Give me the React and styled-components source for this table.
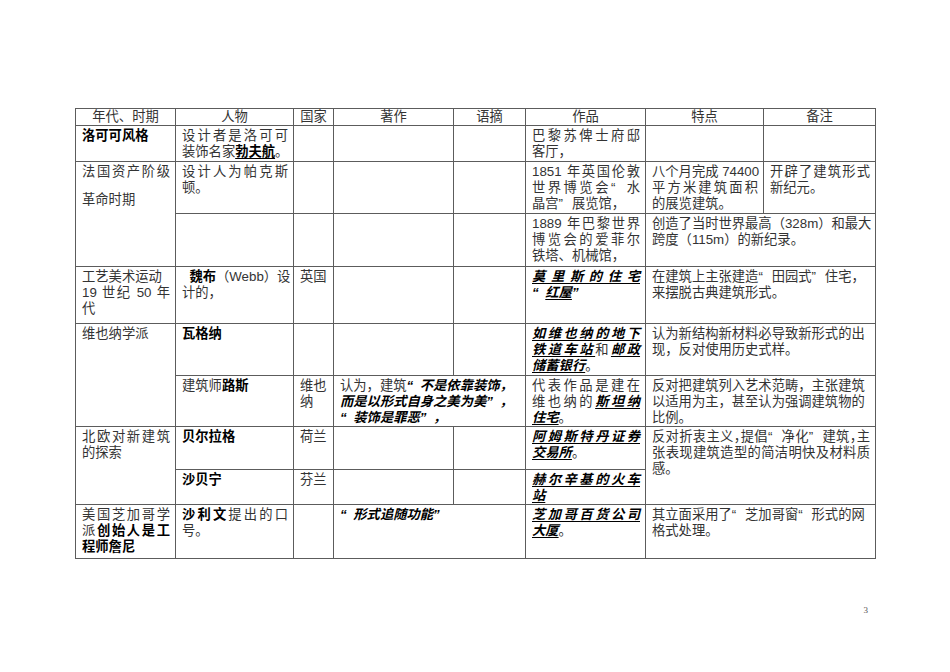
import React from "react";
import styled, { createGlobalStyle } from "styled-components";

const GlobalStyle = createGlobalStyle`
  html, body {
    margin: 0;
    padding: 0;
    background: #ffffff;
  }
  body {
    font-family: "Liberation Sans", "Noto Sans CJK SC", sans-serif;
    color: #333;
  }
`;

const Page = styled.div`
  width: 950px;
  min-height: 672px;
  box-sizing: border-box;
  padding-top: 108px;
`;

const Sheet = styled.table`
  margin-left: 75px;
  width: 800px;
  border-collapse: collapse;
  table-layout: fixed;
  font-size: 13.3px;
  line-height: 16px;
`;

const Col = styled.col`
  width: ${(p) => p.$w}px;
`;

const Row = styled.tr`
  height: ${(p) => p.$h}px;
`;

const Head = styled.th`
  border: 1px solid #5c5c5c;
  padding: 0;
  font-weight: 400;
  text-align: center;
  vertical-align: middle;
  color: #333;
`;

const Cell = styled.td`
  border: 1px solid #5c5c5c;
  padding: 2px 5px 0 6px;
  vertical-align: top;
`;

const Ln = styled.span`
  display: block;
  white-space: nowrap;
  text-align: justify;
  text-align-last: ${(p) => (p.$j ? "justify" : "left")};
  margin-bottom: ${(p) => p.$gap || 0}px;
`;

const B = styled.b`
  font-weight: 700;
  color: #000;
`;

const Work = styled.span`
  font-weight: 700;
  font-style: ${(p) => (p.$upright ? "normal" : "italic")};
  text-decoration: underline;
  text-underline-offset: 2px;
  color: #000;
`;

const Saying = styled.span`
  font-weight: 700;
  font-style: italic;
  color: #000;
`;

/* full-width curly quotes, drawn with the latin glyph and padded to one em */
const Q = styled.span`
  display: inline-block;
  width: 1em;
  text-align: ${(p) => (p.$open ? "right" : "left")};
`;

const Tight = styled.span`
  font-feature-settings: "halt";
`;

const Footer = styled.div`
  display: flex;
  justify-content: flex-end;
  padding: 46px 82px 0 0;
  font-family: "Liberation Serif", serif;
  font-size: 9px;
  color: #555;
`;

const Open = () => <Q $open>“</Q>;
const Close = () => <Q>”</Q>;

const heads = ["年代、时期", "人物", "国家", "著作", "语摘", "作品", "特点", "备注"];
const widths = [100, 118, 40, 120, 72, 120, 118, 112];

export default function App() {
  return (
    <Page>
      <GlobalStyle />
      <Sheet>
        <colgroup>
          {widths.map((w, i) => (
            <Col key={i} $w={w} />
          ))}
        </colgroup>
        <tbody>
          <Row $h={17}>
            {heads.map((h) => (
              <Head key={h}>{h}</Head>
            ))}
          </Row>

          <Row $h={36}>
            <Cell>
              <Ln><B>洛可可风格</B></Ln>
            </Cell>
            <Cell>
              <Ln $j>设计者是洛可可</Ln>
              <Ln>装饰名家<Work $upright>勃夫航</Work>。</Ln>
            </Cell>
            <Cell />
            <Cell />
            <Cell />
            <Cell>
              <Ln $j>巴黎苏俾士府邸</Ln>
              <Ln>客厅，</Ln>
            </Cell>
            <Cell />
            <Cell />
          </Row>

          <Row $h={52}>
            <Cell rowSpan={2}>
              <Ln $j $gap={12}>法国资产阶级</Ln>
              <Ln>革命时期</Ln>
            </Cell>
            <Cell>
              <Ln $j>设计人为帕克斯</Ln>
              <Ln>顿。</Ln>
            </Cell>
            <Cell />
            <Cell />
            <Cell />
            <Cell>
              <Ln $j>1851 年英国伦敦</Ln>
              <Ln $j>世界博览会<Open />水</Ln>
              <Ln>晶宫<Close />展览馆，</Ln>
            </Cell>
            <Cell>
              <Ln $j>八个月完成 74400</Ln>
              <Ln $j>平方米建筑面积</Ln>
              <Ln>的展览建筑。</Ln>
            </Cell>
            <Cell>
              <Ln $j>开辟了建筑形式</Ln>
              <Ln>新纪元。</Ln>
            </Cell>
          </Row>

          <Row $h={53}>
            <Cell />
            <Cell />
            <Cell />
            <Cell />
            <Cell>
              <Ln $j>1889 年巴黎世界</Ln>
              <Ln $j>博览会的爱菲尔</Ln>
              <Ln>铁塔、机械馆，</Ln>
            </Cell>
            <Cell colSpan={2}>
              <Ln>创造了当时世界最高（328m）和最大</Ln>
              <Ln>跨度（115m）的新纪录。</Ln>
            </Cell>
          </Row>

          <Row $h={57}>
            <Cell>
              <Ln>工艺美术运动</Ln>
              <Ln $j>19 世纪 50 年</Ln>
              <Ln>代</Ln>
            </Cell>
            <Cell>
              <Ln $j>&nbsp;&nbsp;<B>魏布</B>（Webb）设</Ln>
              <Ln>计的，</Ln>
            </Cell>
            <Cell>
              <Ln>英国</Ln>
            </Cell>
            <Cell />
            <Cell />
            <Cell>
              <Ln $j><Work>莫里斯的住宅</Work></Ln>
              <Ln><Work><Open />红屋<Close /></Work></Ln>
            </Cell>
            <Cell colSpan={2}>
              <Ln>在建筑上主张建造<Open />田园式<Close />住宅，</Ln>
              <Ln>来摆脱古典建筑形式。</Ln>
            </Cell>
          </Row>

          <Row $h={52}>
            <Cell rowSpan={2}>
              <Ln>维也纳学派</Ln>
            </Cell>
            <Cell>
              <Ln><B>瓦格纳</B></Ln>
            </Cell>
            <Cell />
            <Cell />
            <Cell />
            <Cell>
              <Ln $j><Work>如维也纳的地下</Work></Ln>
              <Ln $j><Work>铁道车站</Work>和<Work>邮政</Work></Ln>
              <Ln><Work>储蓄银行</Work>。</Ln>
            </Cell>
            <Cell colSpan={2}>
              <Ln>认为新结构新材料必导致新形式的出</Ln>
              <Ln>现，反对使用历史式样。</Ln>
            </Cell>
          </Row>

          <Row $h={50}>
            <Cell>
              <Ln>建筑师<B>路斯</B></Ln>
            </Cell>
            <Cell>
              <Ln>维也</Ln>
              <Ln>纳</Ln>
            </Cell>
            <Cell colSpan={2}>
              <Ln>认为，建筑<Saying><Open />不是依靠装饰，</Saying></Ln>
              <Ln><Saying>而是以形式自身之美为美<Close />，</Saying></Ln>
              <Ln><Saying><Open />装饰是罪恶<Close />，</Saying></Ln>
            </Cell>
            <Cell>
              <Ln $j>代表作品是建在</Ln>
              <Ln $j>维也纳的<Work>斯坦纳</Work></Ln>
              <Ln><Work>住宅</Work>。</Ln>
            </Cell>
            <Cell colSpan={2}>
              <Ln>反对把建筑列入艺术范畴，主张建筑</Ln>
              <Ln>以适用为主，甚至认为强调建筑物的</Ln>
              <Ln>比例。</Ln>
            </Cell>
          </Row>

          <Row $h={43}>
            <Cell rowSpan={2}>
              <Ln $j>北欧对新建筑</Ln>
              <Ln>的探索</Ln>
            </Cell>
            <Cell>
              <Ln><B>贝尔拉格</B></Ln>
            </Cell>
            <Cell>
              <Ln>荷兰</Ln>
            </Cell>
            <Cell />
            <Cell />
            <Cell>
              <Ln $j><Work>阿姆斯特丹证券</Work></Ln>
              <Ln><Work>交易所</Work>。</Ln>
            </Cell>
            <Cell colSpan={2} rowSpan={2}>
              <Ln $j>反对折衷主义<Tight>，</Tight>提倡<Open />净化<Close />建筑<Tight>，</Tight>主</Ln>
              <Ln $j>张表现建筑造型的简洁明快及材料质</Ln>
              <Ln>感。</Ln>
            </Cell>
          </Row>

          <Row $h={35}>
            <Cell>
              <Ln><B>沙贝宁</B></Ln>
            </Cell>
            <Cell>
              <Ln>芬兰</Ln>
            </Cell>
            <Cell />
            <Cell />
            <Cell>
              <Ln $j><Work>赫尔辛基的火车</Work></Ln>
              <Ln><Work>站</Work></Ln>
            </Cell>
          </Row>

          <Row $h={54}>
            <Cell>
              <Ln $j>美国芝加哥学</Ln>
              <Ln $j>派<B>创始人是工</B></Ln>
              <Ln><B>程师詹尼</B></Ln>
            </Cell>
            <Cell>
              <Ln $j><B>沙利文</B>提出的口</Ln>
              <Ln>号。</Ln>
            </Cell>
            <Cell />
            <Cell colSpan={2}>
              <Ln><Saying><Open />形式追随功能<Close /></Saying></Ln>
            </Cell>
            <Cell>
              <Ln $j><Work>芝加哥百货公司</Work></Ln>
              <Ln><Work>大厦</Work>。</Ln>
            </Cell>
            <Cell colSpan={2}>
              <Ln>其立面采用了<Open />芝加哥窗<Open />形式的网</Ln>
              <Ln>格式处理。</Ln>
            </Cell>
          </Row>
        </tbody>
      </Sheet>
      <Footer>3</Footer>
    </Page>
  );
}
